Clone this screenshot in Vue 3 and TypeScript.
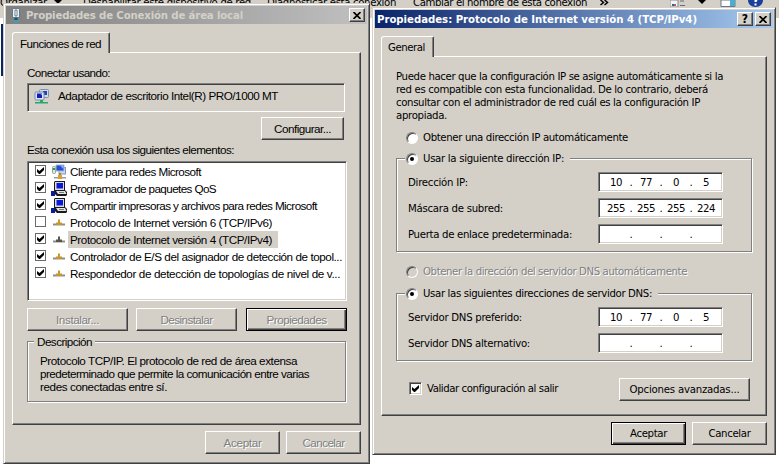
<script setup lang="ts">
import type { Directive } from 'vue'

// Tracks a label out or in so that it fills the given width in pixels.
const vFit: Directive<HTMLElement, number> = {
  mounted(el, { value }) {
    const count = (el.textContent ?? '').length
    const natural = el.getBoundingClientRect().width
    el.style.letterSpacing = `${(value - natural) / count}px`
  },
}

type Icon = 'client' | 'service' | 'protocol'

interface Item {
  label: string
  width: number
  icon: Icon
  checked: boolean
  selected?: boolean
}

const items: Item[] = [
  { label: 'Cliente para redes Microsoft', width: 131, icon: 'client', checked: true },
  { label: 'Programador de paquetes QoS', width: 146, icon: 'service', checked: true },
  { label: 'Compartir impresoras y archivos para redes Microsoft', width: 247, icon: 'service', checked: true },
  { label: 'Protocolo de Internet versión 6 (TCP/IPv6)', width: 202, icon: 'protocol', checked: false },
  { label: 'Protocolo de Internet versión 4 (TCP/IPv4)', width: 202, icon: 'protocol', checked: true, selected: true },
  { label: 'Controlador de E/S del asignador de detección de topol...', width: 272, icon: 'protocol', checked: true },
  { label: 'Respondedor de detección de topologías de nivel de v...', width: 270, icon: 'protocol', checked: true },
]

const description = [
  { text: 'Protocolo TCP/IP. El protocolo de red de área extensa', width: 257 },
  { text: 'predeterminado que permite la comunicación entre varias', width: 269 },
  { text: 'redes conectadas entre sí.', width: 127 },
]

const intro = [
  { text: 'Puede hacer que la configuración IP se asigne automáticamente si la', width: 327 },
  { text: 'red es compatible con esta funcionalidad. De lo contrario, deberá', width: 312 },
  { text: 'consultar con el administrador de red cuál es la configuración IP', width: 304 },
  { text: 'apropiada.', width: 51 },
]

const addressRows = [
  { label: 'Dirección IP:', width: 60, octets: ['10', '77', '0', '5'] },
  { label: 'Máscara de subred:', width: 95, octets: ['255', '255', '255', '224'] },
  { label: 'Puerta de enlace predeterminada:', width: 164, octets: ['', '', '', ''] },
]

const dnsRows = [
  { label: 'Servidor DNS preferido:', width: 114, octets: ['10', '77', '0', '5'] },
  { label: 'Servidor DNS alternativo:', width: 122, octets: ['', '', '', ''] },
]
</script>

<template>
  <div class="desktop">
    <div class="toolbar">
      <span class="cmd c1"><span v-fit="47" class="t">Organizar</span></span>
      <svg class="arrow" width="8" height="5" viewBox="0 0 8 5"><path d="M0 0h8L4 4z" /></svg>
      <span class="cmd c2"><span v-fit="168" class="t">Deshabilitar este dispositivo de red</span></span>
      <span class="cmd c3"><span v-fit="129" class="t">Diagnosticar esta conexión</span></span>
      <span class="cmd c4"><span v-fit="174" class="t">Cambiar el nombre de esta conexión</span></span>
      <svg class="more" width="9" height="6" viewBox="0 0 9 6"><path d="M0.500 0l3 2.500-3 2.500M4.500 0l3 2.500-3 2.500" fill="none" stroke="#000" stroke-width="1.500" /></svg>
      <svg class="tools" width="100" height="8" viewBox="0 0 100 8">
        <path d="M0 0h8v7H0z" fill="#f4f4f4" stroke="#888" />
        <path d="M2 4h2v2H2z" fill="#26a" /><path d="M4 4h2v2H4z" fill="#c55" />
        <path d="M10 1h4M10 5.500h5" stroke="#667" />
        <path d="M28 0h8l-4 4z" fill="#000" />
        <path d="M51 0h14v6.500H51z" fill="#fff" stroke="#678" /><path d="M60 0h5v6h-5z" fill="#4aaed0" />
        <path d="M78 0h15c0 4-3 7-7.500 7S78 4 78 0z" fill="#1b3f9c" />
        <path d="M84.500 0h3l-1 2h-2zM84.500 3.500h2v2h-2z" fill="#fff" />
      </svg>
    </div>
    <div class="edge"></div>

    <section class="window connection">
      <header class="title inactive">
        <svg class="plug" width="10" height="16" viewBox="0 0 10 16">
          <path d="M1.500 2.500C1.500 1 8.500 1 8.500 2.500v8h-7z" fill="#eaf4fa" stroke="#5d7888" />
          <path d="M4 3h2v6H4z" fill="#fff" stroke="#51616c" stroke-width=".8" />
          <path d="M3.500 11h3v2h-3z" fill="#2a4a5a" /><path d="M3 13h4v2.500H3z" fill="#2ba5cf" />
        </svg>
        <span v-fit="217" class="t">Propiedades de Conexión de área local</span>
        <span class="spacer"></span>
        <span class="cap"><svg width="8" height="7" viewBox="0 0 8 7"><path d="M0.500 0l7 7M7.500 0l-7 7" stroke="#000" stroke-width="1.700" /></svg></span>
      </header>
      <div class="tab"><span v-fit="81" class="t">Funciones de red</span></div>
      <div class="panel">
        <div class="line"><span v-fit="83" class="t">Conectar usando:</span></div>
        <div class="adapter sunken">
          <svg width="16" height="17" viewBox="0 0 16 17">
            <rect x="5.500" y="1.500" width="9" height="8" rx="1" fill="#cdd9ec" stroke="#8090ac" />
            <path d="M9 3h4v4H9z" fill="#2742a8" />
            <rect x="1" y="4" width="9" height="8" rx="1" fill="#dce6f4" stroke="#7488aa" />
            <path d="M3 5.500h5v4.500H3z" fill="#0c1cb4" /><path d="M6 5.500h2v2z" fill="#7aa0f0" />
            <path d="M6 12h3v2h5v1.500H1V14h5z" fill="#26a86a" />
          </svg>
          <span v-fit="220" class="t">Adaptador de escritorio Intel(R) PRO/1000 MT</span>
        </div>
        <div class="configure"><button class="btn"><span v-fit="57" class="t">Configurar...</span></button></div>
        <div class="line using"><span v-fit="207" class="t">Esta conexión usa los siguientes elementos:</span></div>
        <ul class="list sunken">
          <li v-for="item in items" :key="item.label">
            <span class="tick"><svg v-if="item.checked" width="7" height="7" viewBox="0 0 7 7"><path d="M0 2v3l2 2h1l4-4V0L2.500 4z" /></svg></span>
            <svg v-if="item.icon === 'client'" class="ico" width="17" height="17" viewBox="0 0 17 17">
              <rect x="1.500" y="3.500" width="3" height="7" rx="1" fill="#dfe9dc" stroke="#93a08e" />
              <path d="M2 5h2v2H2z" fill="#3b9440" />
              <rect x="8" y="4.500" width="6.500" height="6.500" fill="#c8d7ee" stroke="#8798b4" />
              <path d="M5 2h8v6H5z" fill="#244fd0" stroke="#a9b9d8" /><path d="M9 2.500h3.500V6z" fill="#88b4ff" />
              <path d="M8 10h2v3H8z" fill="#9b8245" /><path d="M3 14h12v1.500H3z" fill="#9b9b98" /><path d="M7 12h4v4H7z" fill="#d9a12c" />
            </svg>
            <svg v-else-if="item.icon === 'service'" class="ico" width="17" height="17" viewBox="0 0 17 17">
              <path d="M4 1h10v9l2 2v3l-1 1H6l-3-3V2z" fill="#1a1a1a" />
              <path d="M4 2h9v8H4z" fill="#d9dce2" /><path d="M5.500 3h6.500v5.500H5.500z" fill="#0818d8" />
              <path d="M5 11h9l1.500 3H7z" fill="#e4e4e4" /><path d="M8 12.500h5" stroke="#777" />
              <path d="M0 11h3l1 1v4H0z" fill="#0c1c9c" />
            </svg>
            <svg v-else class="ico" width="17" height="17" viewBox="0 0 17 17">
              <path d="M2 10.500h12" stroke="#8c8c88" stroke-width="2" />
              <path d="M7 5.500h2v3h2v3.500H5V8.500h2z" :fill="item.selected ? '#55554c' : '#c9952d'" />
              <path d="M2 11.500h12" stroke="#c8c8c4" />
            </svg>
            <span class="label" :class="{ selected: item.selected }"><span v-fit="item.width" class="t">{{ item.label }}</span></span>
          </li>
        </ul>
        <div class="trio">
          <button class="btn off"><span v-fit="43" class="t">Instalar...</span></button>
          <button class="btn off"><span v-fit="52" class="t">Desinstalar</span></button>
          <button class="btn off default"><span v-fit="60" class="t">Propiedades</span></button>
        </div>
        <div class="group about">
          <div class="legend"><span v-fit="55" class="t">Descripción</span></div>
          <div v-for="row in description" :key="row.text" class="line"><span v-fit="row.width" class="t">{{ row.text }}</span></div>
        </div>
      </div>
      <footer class="actions">
        <button class="btn off"><span v-fit="38" class="t">Aceptar</span></button>
        <button class="btn off"><span v-fit="42" class="t">Cancelar</span></button>
      </footer>
    </section>

    <section class="window protocol">
      <header class="title active">
        <span v-fit="320" class="t">Propiedades: Protocolo de Internet versión 4 (TCP/IPv4)</span>
        <span class="spacer"></span>
        <span class="cap help">?</span>
        <span class="cap"><svg width="8" height="7" viewBox="0 0 8 7"><path d="M0.500 0l7 7M7.500 0l-7 7" stroke="#000" stroke-width="1.700" /></svg></span>
      </header>
      <div class="tab"><span v-fit="37" class="t">General</span></div>
      <div class="panel">
        <div class="intro">
          <div v-for="row in intro" :key="row.text" class="line"><span v-fit="row.width" class="t">{{ row.text }}</span></div>
        </div>
        <div class="choice auto-ip"><span class="radio"></span><span v-fit="205" class="t">Obtener una dirección IP automáticamente</span></div>
        <div class="group address">
          <div class="legend choice"><span class="radio on"></span><span v-fit="141" class="t">Usar la siguiente dirección IP:</span></div>
          <div v-for="row in addressRows" :key="row.label" class="row">
            <span class="name"><span v-fit="row.width" class="t">{{ row.label }}</span></span>
            <span class="field sunken">
              <template v-for="(octet, i) in row.octets" :key="i">
                <span v-if="i > 0" class="dot">.</span><span class="octet">{{ octet }}</span>
              </template>
            </span>
          </div>
        </div>
        <div class="choice auto-dns off"><span class="radio disabled"></span><span v-fit="264" class="t">Obtener la dirección del servidor DNS automáticamente</span></div>
        <div class="group dns">
          <div class="legend choice"><span class="radio on"></span><span v-fit="229" class="t">Usar las siguientes direcciones de servidor DNS:</span></div>
          <div v-for="row in dnsRows" :key="row.label" class="row">
            <span class="name"><span v-fit="row.width" class="t">{{ row.label }}</span></span>
            <span class="field sunken">
              <template v-for="(octet, i) in row.octets" :key="i">
                <span v-if="i > 0" class="dot">.</span><span class="octet">{{ octet }}</span>
              </template>
            </span>
          </div>
        </div>
        <div class="final">
          <span class="check sunken"><svg width="7" height="7" viewBox="0 0 7 7"><path d="M0 2v3l2 2h1l4-4V0L2.500 4z" /></svg></span>
          <span v-fit="131" class="t">Validar configuración al salir</span>
          <span class="spacer"></span>
          <button class="btn"><span v-fit="110" class="t">Opciones avanzadas...</span></button>
        </div>
      </div>
      <footer class="actions">
        <button class="btn default"><span v-fit="37" class="t">Aceptar</span></button>
        <button class="btn"><span v-fit="42" class="t">Cancelar</span></button>
      </footer>
    </section>
  </div>
</template>

<style>
body { margin: 0; background: #fff; }
</style>

<style scoped>
* { box-sizing: border-box; }
.desktop {
  position: relative;
  width: 779px;
  height: 475px;
  overflow: hidden;
  background: #fff;
  color: #000;
  font: 11.300px/13px "DejaVu Sans Condensed", "DejaVu Sans", sans-serif;
}
.t { display: inline-block; white-space: nowrap; line-height: 13px; }
.spacer { flex: 1; }

.toolbar {
  position: relative;
  height: 18px;
  background: #d4d0c8;
  overflow: hidden;
}
.cmd, .arrow, .more, .tools { position: absolute; top: -4px; }
.c1 { left: 0; }
.c2 { left: 83px; }
.c3 { left: 267px; }
.c4 { left: 413px; }
.arrow { left: 54px; top: 0; }
.more { left: 600px; top: 0; }
.tools { left: 670px; top: 0; }
.edge {
  position: absolute;
  left: 1px;
  top: 24px;
  width: 2px;
  height: 52px;
  background: #0a246a;
}

.window {
  position: absolute;
  padding: 2px;
  background: #d4d0c8;
  border: 1px solid;
  border-color: #d4d0c8 #404040 #404040 #d4d0c8;
  box-shadow: inset 1px 1px 0 #fff, inset -1px -1px 0 #808080;
}
.connection {
  left: 3px;
  top: 3px;
  width: 367px;
  height: 461px;
  font-family: "Liberation Sans", Arial, sans-serif;
  font-size: 11.700px;
}
.protocol { left: 372px; top: 7px; width: 404px; height: 448px; }

.title {
  display: flex;
  align-items: center;
  height: 18px;
  padding: 0 2px;
  font: bold 11.300px/13px "DejaVu Sans Condensed", "DejaVu Sans", sans-serif;
}
.inactive { padding-left: 5px; color: #d4d0c8; background: linear-gradient(90deg, #808080, #c0c0c0); }
.active { color: #fff; background: linear-gradient(90deg, #0a246a, #a6caf0); }
.plug { margin-right: 5px; }
.cap {
  display: flex;
  align-items: center;
  justify-content: center;
  width: 16px;
  height: 14px;
  background: #d4d0c8;
  border: 1px solid;
  border-color: #fff #404040 #404040 #fff;
  box-shadow: inset -1px -1px 0 #808080;
}
.help { margin-right: 2px; color: #000; font-size: 12px; }

.tab {
  position: relative;
  z-index: 1;
  display: flex;
  margin: 8px 0 0 6px;
  height: 21px;
  padding: 4px 0 0 7px;
  background: #d4d0c8;
  border: 1px solid #fff;
  border-right-color: #404040;
  border-bottom: 0;
  border-radius: 3px 2px 0 0;
  box-shadow: inset -1px 0 0 #808080;
}
.connection .tab { width: 98px; }
.protocol .tab { width: 53px; padding-left: 6px; }
.panel {
  display: flex;
  flex-direction: column;
  margin: -1px 6px 0;
  padding: 13px 13px 0 14px;
  border: 1px solid;
  border-color: #fff #404040 #404040 #fff;
  box-shadow: inset -1px -1px 0 #808080;
}
.connection .panel { height: 373px; }
.protocol .panel { height: 360px; }
.line { display: flex; height: 13px; }

.sunken {
  background: #fff;
  border: 1px solid;
  border-color: #808080 #fff #fff #808080;
  box-shadow: inset 1px 1px 0 #404040, inset -1px -1px 0 #d4d0c8;
}
.adapter {
  display: flex;
  align-items: center;
  gap: 8px;
  width: 318px;
  height: 29px;
  margin-top: 4px;
  padding: 0 0 5px 6px;
  background: #d4d0c8;
  box-shadow: inset 1px 1px 0 #404040;
}
.adapter svg { position: relative; top: 1px; }
.configure { display: flex; width: 317px; justify-content: flex-end; margin: 5px 0 3px; }
.configure .btn { width: 83px; }

.btn {
  display: flex;
  align-items: center;
  justify-content: center;
  width: 75px;
  height: 23px;
  margin: 0;
  padding: 0;
  color: #000;
  font: inherit;
  background: #d4d0c8;
  border: 1px solid;
  border-color: #fff #404040 #404040 #fff;
  border-radius: 0;
  box-shadow: inset -1px -1px 0 #808080;
}
.btn.default {
  border-color: #000;
  box-shadow: inset 1px 1px 0 #fff, inset -1px -1px 0 #404040, inset -2px -2px 0 #808080;
}
.off { color: #808080; text-shadow: 1px 1px 0 #fff; }
.btn.off { color: #808080; }

.list {
  width: 320px;
  height: 140px;
  margin: 5px 0 0;
  padding: 1px 1px 1px 7px;
  list-style: none;
}
.list li { display: flex; align-items: center; height: 17px; }
.tick {
  display: flex;
  flex: none;
  align-items: center;
  justify-content: center;
  width: 11px;
  height: 11px;
  margin-bottom: 2px;
  border: 1px solid #6a6a6a;
}
.ico { flex: none; margin: 0 0 0 5px; }
.label { flex: none; height: 17px; padding: 2px 6px 0 2px; }
.selected { background: #d4d0c8; }

.trio { display: flex; margin-top: 7px; gap: 8px; }
.trio .btn { width: 101px; }
.trio .default { margin-left: 1px; }

.group {
  position: relative;
  border: 1px solid #808080;
  box-shadow: 1px 1px 0 #fff, inset 1px 1px 0 #fff;
}
.legend {
  position: absolute;
  top: -7px;
  background: #d4d0c8;
}
.about { width: 319px; height: 61px; margin-top: 10px; padding: 12px 0 0 12px; }
.about .legend { left: 6px; padding: 0 3px; height: 13px; }

.actions { display: flex; justify-content: flex-end; gap: 6px; margin: 6px 6px 0; }

.choice { display: flex; align-items: center; height: 13px; gap: 5px; }
.radio {
  display: flex;
  align-items: center;
  justify-content: center;
  width: 12px;
  height: 12px;
  background: #fff;
  border: 1px solid;
  border-color: #808080 #fff #fff #808080;
  border-radius: 50%;
  box-shadow: inset 1px 1px 0 #404040;
}
.radio.on::after { content: ""; width: 4px; height: 4px; border-radius: 50%; background: #000; }
.radio.disabled { background: #d4d0c8; }
.auto-ip { margin: 9px 0 14px 10px; }
.auto-dns { margin: 13px 0 15px 10px; }
.group.address, .group.dns { width: 356px; padding: 13px 0 0 11px; }
.address { height: 94px; }
.dns { height: 68px; }
.group > .legend.choice { left: 8px; padding: 0 6px 0 1px; }
.row { display: flex; align-items: center; height: 20px; margin-bottom: 6px; }
.name { width: 190px; height: 13px; }
.field { display: flex; align-items: center; width: 125px; height: 20px; padding-left: 6px; }
.octet { width: 22px; text-align: center; letter-spacing: -0.400px; }
.dot { width: 8px; text-align: center; }

.final { display: flex; align-items: center; width: 354px; margin-top: 17px; padding-left: 13px; }
.final .btn { width: 131px; }
.check {
  display: flex;
  align-items: center;
  justify-content: center;
  width: 13px;
  height: 13px;
  margin: 0 5px 3px 0;
}
.final > .t { margin-bottom: 3px; }
</style>
